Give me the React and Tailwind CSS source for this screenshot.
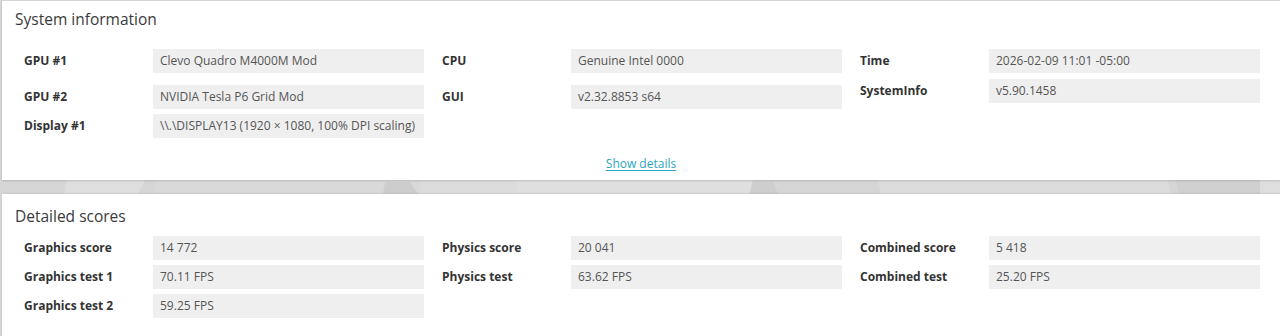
import React from 'react';

const systemInfo = [
  [
    { label: 'GPU #1', value: 'Clevo Quadro M4000M Mod', gap: 'mb-[12px]' },
    { label: 'GPU #2', value: 'NVIDIA Tesla P6 Grid Mod', gap: 'mb-[5px]' },
    { label: 'Display #1', value: '\\\\.\\DISPLAY13 (1920 × 1080, 100% DPI scaling)' },
  ],
  [
    { label: 'CPU', value: 'Genuine Intel 0000', gap: 'mb-[12px]' },
    { label: 'GUI', value: 'v2.32.8853 s64' },
  ],
  [
    { label: 'Time', value: '2026-02-09 11:01 -05:00', gap: 'mb-[6px]' },
    { label: 'SystemInfo', value: 'v5.90.1458' },
  ],
];

const scores = [
  [
    { label: 'Graphics score', value: '14 772' },
    { label: 'Graphics test 1', value: '70.11 FPS' },
    { label: 'Graphics test 2', value: '59.25 FPS' },
  ],
  [
    { label: 'Physics score', value: '20 041' },
    { label: 'Physics test', value: '63.62 FPS' },
  ],
  [
    { label: 'Combined score', value: '5 418' },
    { label: 'Combined test', value: '25.20 FPS' },
  ],
];

const Row = ({ label, value, gap = '' }) => (
  <div className={`flex items-center ${gap}`}>
    <div className="w-[129px] shrink-0 text-[12px] font-bold text-[#333]">{label}</div>
    <div className="w-[271px] h-[24px] flex items-center px-[7px] bg-[#efefef] text-[12px] text-[#555] whitespace-nowrap">
      {value}
    </div>
  </div>
);

const App = () => {
  return (
    <div
      className="relative h-[336px] w-[1280px] overflow-hidden bg-[#d6d6d6]"
      style={{ fontFamily: '"Open Sans", "Noto Sans", sans-serif' }}
    >
      {/* Background low-poly pattern */}
      <svg className="absolute inset-0" width="1280" height="336" viewBox="0 0 1280 336">
        <polygon points="70,150 160,150 120,230 60,230" fill="#dedede" />
        <polygon points="160,150 420,150 420,230 150,230" fill="#d9d9d9" />
        <polygon points="420,150 560,150 640,230 420,230" fill="#dcdcdc" />
        <polygon points="385,182 410,182 418,194 383,194" fill="#cdcdcd" />
        <polygon points="515,150 760,150 740,230 520,230" fill="#dfdfdf" />
        <polygon points="753,182 773,182 778,194 750,194" fill="#cecece" />
        <polygon points="870,150 1160,150 1180,230 890,230" fill="#dcdcdc" />
        <polygon points="1170,150 1260,150 1260,230 1185,230" fill="#d0d0d0" />
        <polygon points="1260,150 1280,150 1280,230 1260,230" fill="#dedede" />
      </svg>

      <div className="relative flex flex-col gap-[14px] pt-[1px]">
        {/* System information */}
        <div className="ml-[2px] h-[179px] bg-white shadow-[0_1px_2px_rgba(0,0,0,0.15)]">
          <h2 className="pl-[13px] pt-[8px] text-[15.5px] leading-[20px] font-medium text-[#3a3a3a]">
            System information
          </h2>
          <div className="mt-[20px] flex gap-[18px] pl-[22px]">
            {systemInfo.map((col, i) => (
              <div key={i} className="flex flex-col">
                {col.map((r) => (
                  <Row key={r.label} {...r} />
                ))}
              </div>
            ))}
          </div>
          <div className="mt-[12px] text-center">
            <a href="#" className="text-[12px] text-[#2ba6c2] underline underline-offset-2">
              Show details
            </a>
          </div>
        </div>

        {/* Detailed scores */}
        <div className="ml-[2px] h-[160px] bg-white shadow-[0_-1px_2px_rgba(0,0,0,0.08)]">
          <h2 className="pl-[13px] pt-[12px] text-[15.5px] leading-[20px] font-medium text-[#3a3a3a]">
            Detailed scores
          </h2>
          <div className="mt-[10px] flex gap-[18px] pl-[22px]">
            {scores.map((col, i) => (
              <div key={i} className="flex flex-col gap-[5px]">
                {col.map((r) => (
                  <Row key={r.label} {...r} />
                ))}
              </div>
            ))}
          </div>
        </div>
      </div>
    </div>
  );
};

export default App;
